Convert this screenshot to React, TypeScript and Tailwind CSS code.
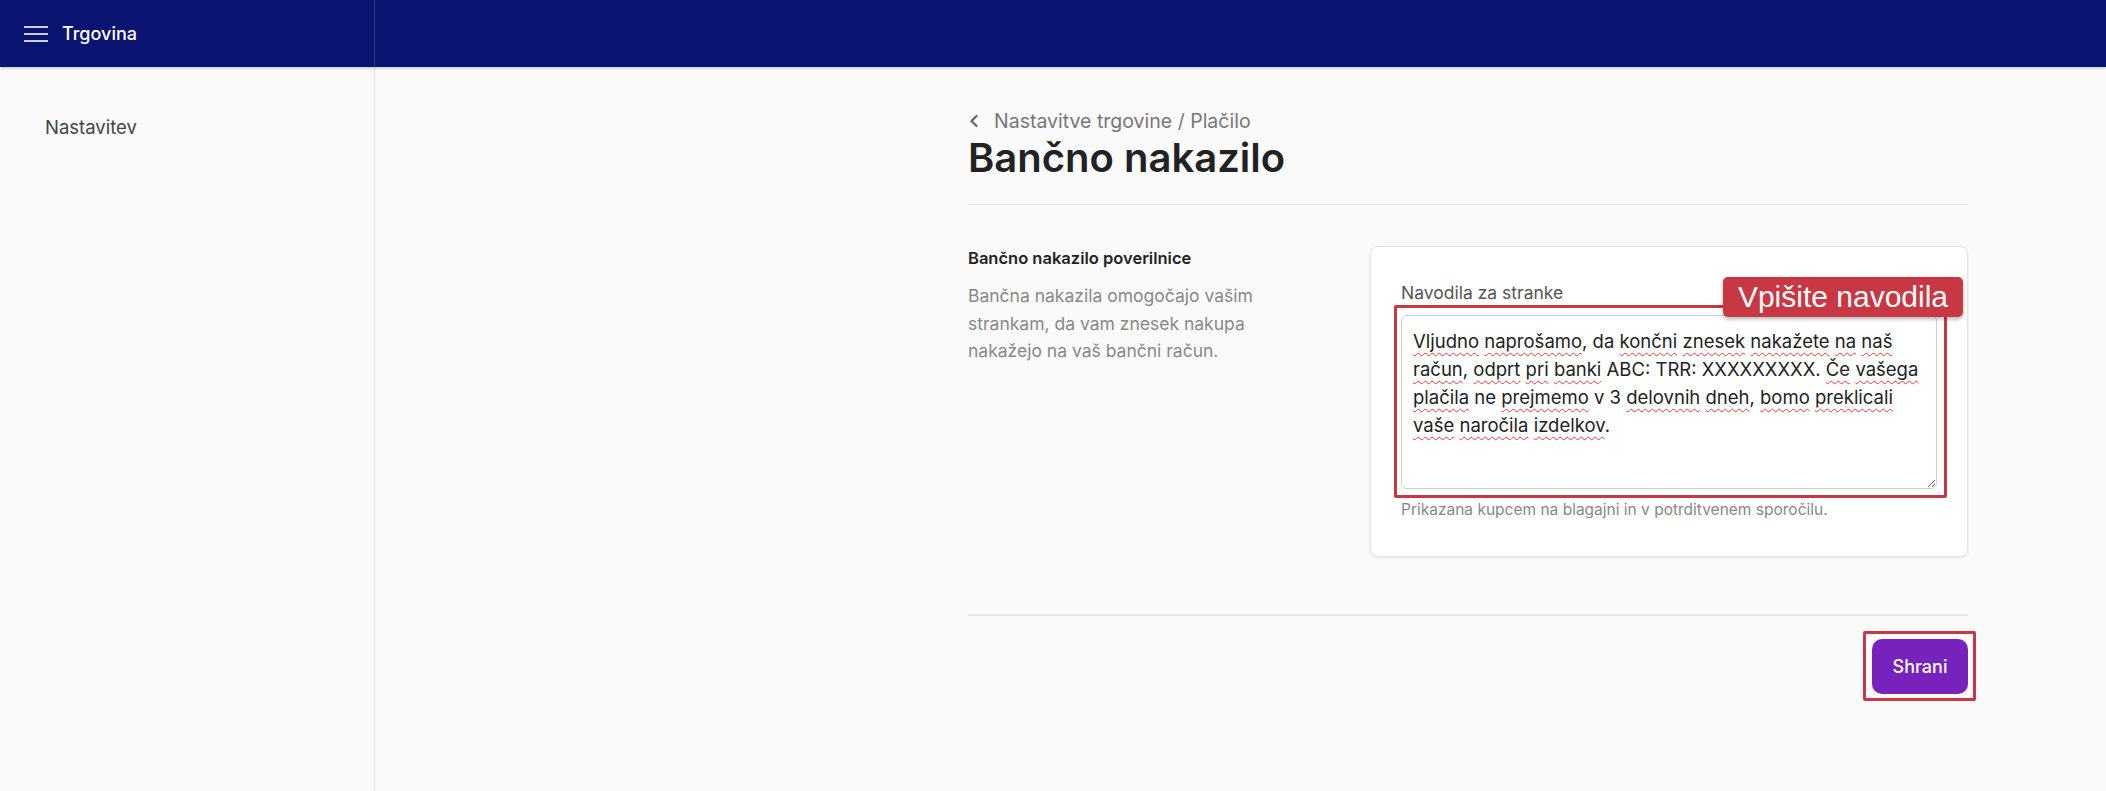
import { ChevronLeft } from "lucide-react";

const font = { fontFamily: "Inter, 'Noto Sans', sans-serif" };

type Word = { t: string; u?: boolean };

const lines: Word[][] = [
  [
    { t: "Vljudno", u: true },
    { t: " " },
    { t: "naprošamo", u: true },
    { t: ", da " },
    { t: "končni", u: true },
    { t: " " },
    { t: "znesek", u: true },
    { t: " " },
    { t: "nakažete", u: true },
    { t: " " },
    { t: "na", u: true },
    { t: " " },
    { t: "naš", u: true },
  ],
  [
    { t: "račun", u: true },
    { t: ", " },
    { t: "odprt", u: true },
    { t: " " },
    { t: "pri", u: true },
    { t: " " },
    { t: "banki", u: true },
    { t: " ABC: TRR: XXXXXXXXX. " },
    { t: "Če", u: true },
    { t: " " },
    { t: "vašega", u: true },
  ],
  [
    { t: "plačila", u: true },
    { t: " ne " },
    { t: "prejmemo", u: true },
    { t: " v 3 " },
    { t: "delovnih", u: true },
    { t: " " },
    { t: "dneh", u: true },
    { t: ", " },
    { t: "bomo", u: true },
    { t: " " },
    { t: "preklicali", u: true },
  ],
  [
    { t: "vaše", u: true },
    { t: " " },
    { t: "naročila", u: true },
    { t: " " },
    { t: "izdelkov", u: true },
    { t: "." },
  ],
];

const MenuIcon = () => (
  <svg width="24" height="16" viewBox="0 0 24 16" fill="none">
    <line x1="0" y1="1" x2="24" y2="1" stroke="white" strokeWidth="1.6" />
    <line x1="0" y1="8" x2="24" y2="8" stroke="white" strokeWidth="1.6" />
    <line x1="0" y1="15" x2="24" y2="15" stroke="white" strokeWidth="1.6" />
  </svg>
);

export default function App() {
  return (
    <div className="min-h-screen w-full flex flex-col bg-[#fafafa]" style={font}>
      {/* Top bar */}
      <header className="h-[67px] flex bg-[#0b1470] shadow-[0_1px_3px_rgba(0,0,0,0.25)] relative z-10">
        <div className="w-[375px] flex items-center gap-[14px] pl-6 border-r border-[#2e3785]">
          <MenuIcon />
          <span className="text-white text-[18px] font-medium">Trgovina</span>
        </div>
        <div className="flex-1" />
      </header>

      <div className="flex flex-1">
        {/* Sidebar */}
        <aside className="w-[375px] border-r border-[#e2e2e2] pl-[45px] pt-[47px]">
          <span className="text-[18.5px] leading-[27px] text-[#444]">Nastavitev</span>
        </aside>

        {/* Main */}
        <main className="flex-1 pl-[593px] pt-[42px]">
          <div className="w-[1000px]">
            <div className="border-b border-[#e4e4e4] pb-[22px]">
              <div className="flex items-center gap-[10px] text-[#777] text-[19.5px] leading-[24px]">
                <ChevronLeft className="w-5 h-5 -ml-[4px] text-[#666]" strokeWidth={2.75} />
                <span>Nastavitve trgovine / Plačilo</span>
              </div>
              <h1 className="mt-[1px] text-[40px] leading-[48px] font-semibold text-[#222]">Bančno nakazilo</h1>
            </div>

            <section className="flex justify-between pt-[41px] pb-[57px] border-b-2 border-[#e8e8e8]">
              <div className="w-[330px]">
                <h2 className="text-[16.5px] leading-[24px] font-semibold text-[#222]">Bančno nakazilo poverilnice</h2>
                <p className="mt-[12px] text-[17.5px] leading-[27.5px] text-[#888]">
                  Bančna nakazila omogočajo vašim strankam, da vam znesek nakupa nakažejo na vaš bančni račun.
                </p>
              </div>

              <div className="w-[598px] bg-white border border-[#e5e5e5] rounded-lg shadow-[0_1px_3px_rgba(0,0,0,0.08)] px-[30px] pt-[34px] pb-[35px]">
                <label className="block text-[17.5px] leading-[24px] text-[#555]">Navodila za stranke</label>
                <div className="relative mt-[10px]">
                  <div className="h-[174px] resize-y overflow-auto bg-white border border-[#cfcfcf] rounded-md pl-[11px] pr-3 pt-[11px] text-[18.5px] leading-[28px] text-[#222]">
                    {lines.map((line, i) => (
                      <div key={i} className="whitespace-pre">
                        {line.map((w, j) =>
                          w.u ? (
                            <span
                              key={j}
                              className="underline decoration-wavy decoration-[#e53935] decoration-[1.2px] underline-offset-[4px]"
                            >
                              {w.t}
                            </span>
                          ) : (
                            <span key={j}>{w.t}</span>
                          )
                        )}
                      </div>
                    ))}
                  </div>
                  {/* annotation frame */}
                  <div className="absolute -left-[7px] -top-[10px] -right-[10px] -bottom-[9px] border-[3px] border-[#c83844] rounded-[2px] pointer-events-none" />
                  <div
                    className="absolute -top-[38px] -right-[26px] w-[240px] h-[40px] bg-[#c83844] rounded-[5px] shadow-[0_2px_4px_rgba(0,0,0,0.3)] flex items-center justify-center text-white text-[30px] leading-none"
                    style={{ fontFamily: "'Liberation Sans', Arial, sans-serif" }}
                  >
                    Vpišite navodila
                  </div>
                </div>
                <p className="mt-[10px] text-[15.5px] leading-[22px] text-[#888]">
                  Prikazana kupcem na blagajni in v potrditvenem sporočilu.
                </p>
              </div>
            </section>

            <div className="flex justify-end pt-[23px]">
              <div className="relative">
                <button className="w-[96px] h-[55px] rounded-[10px] bg-[#7722bd] text-white text-[18px] font-medium">
                  Shrani
                </button>
                <div className="absolute -left-[9px] -top-[8px] -right-[8px] -bottom-[7px] border-[3px] border-[#c83844] rounded-[2px] pointer-events-none" />
              </div>
            </div>
          </div>
        </main>
      </div>
    </div>
  );
}
